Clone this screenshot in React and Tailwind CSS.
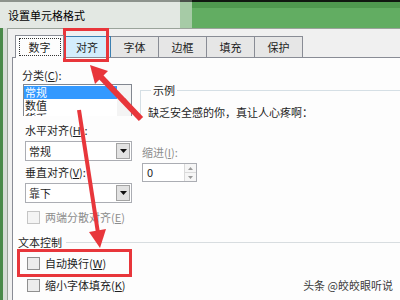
import React from 'react';

const tabs = ['数字', '对齐', '字体', '边框', '填充', '保护'];

function Tab({ label }) {
  if (label === '数字') {
    return (
      <div className="relative z-10 -mb-px w-[49px] h-[23px] border-l border-t border-r border-[#898c95] bg-[#fdfdfd] flex items-center justify-center">
        <div className="w-[42px] h-[18px] border border-dotted border-[#333] flex items-center justify-center leading-[14px]">{label}</div>
      </div>
    );
  }
  if (label === '对齐') {
    return (
      <div className="relative -ml-px w-[48px] h-[21px] border-l border-t border-r border-[#3c7fb1] bg-[#d3edfc] flex items-center justify-center leading-[14px]">
        {label}
        {/* red highlight box */}
        <div className="absolute -left-[1px] -top-[9px] w-[46px] h-[34px] border-[3px] border-[#e8363b]" />
      </div>
    );
  }
  return (
    <div className="-ml-px w-[49px] h-[21px] border-l border-t border-r border-[#898c95] bg-[#e6e6e6] flex items-center justify-center leading-[14px]">
      {label}
    </div>
  );
}

function Check({ disabled }) {
  return (
    <div
      className={
        disabled
          ? 'shrink-0 w-[13px] h-[13px] border border-[#c5c5c5] bg-[#f4f4f4]'
          : 'shrink-0 w-[13px] h-[13px] border border-[#8f8f8f] bg-[#ececec]'
      }
    />
  );
}

function Combo({ value }) {
  return (
    <div className="ml-[3px] h-[20px] w-[107px] border border-[#abadb3] bg-white flex">
      <div className="flex-1 pl-[3px] leading-[18px]">{value}</div>
      <div className="w-[14px] my-px mr-px bg-[#e2e2e2] border border-[#a3a3a3] flex items-center justify-center">
        <svg width="7" height="4" viewBox="0 0 7 4">
          <path d="M0 0h7L3.5 4z" fill="#111" />
        </svg>
      </div>
    </div>
  );
}

export default function App() {
  return (
    <div className="relative w-[400px] h-[300px] overflow-hidden flex flex-col bg-[#dde3dd] font-['Noto_Sans_CJK_SC',sans-serif] text-[11px] text-[#1e1e1e]">
      {/* title bar: light glass on the left, green desktop showing through on the right */}
      <div className="shrink-0 h-[28px] flex">
        <div className="flex-1 flex flex-col bg-[#e3e8e3]">
          <div className="h-[2px] bg-[#8d938d]" />
          <div className="flex-1 flex items-center pl-[8px] text-black leading-[14px]">设置单元格格式</div>
        </div>
        <div className="w-[12px] flex flex-col bg-[#a6cba6]">
          <div className="h-[2px] bg-[#4a514a]" />
        </div>
        <div className="w-[208px] flex flex-col bg-[#62ad62]">
          <div className="h-[2px] bg-[#101810]" />
          <div className="h-[6px] bg-[#4f994f]" />
        </div>
      </div>

      <div className="flex-1 min-h-0 flex">
        <div className="w-[3px] bg-[#4a8a4a]" />
        <div className="w-[4px] bg-[#d6ddd6]" />

        {/* dialog body */}
        <div className="flex-1 min-h-0 flex flex-col bg-[#f0f0f0] border-l border-t border-[#9aa39a]">
          <div className="shrink-0 h-[28px] pl-[7px] flex items-end">
            {tabs.map((t) => (
              <Tab key={t} label={t} />
            ))}
          </div>

          <div className="flex-1 min-h-0 ml-[4px] border-l border-t border-[#898c95] bg-[#fdfdfd] pl-[9px] pt-[10px] flex flex-col">
            <div className="shrink-0 flex">
              {/* left column */}
              <div className="w-[110px] flex flex-col">
                <div className="h-[14px] leading-[14px]">分类(<u>C</u>):</div>
                <div className="mt-[2px] ml-px h-[32px] w-[109px] border-l border-t border-r border-[#828790] bg-white flex overflow-hidden">
                  <div className="flex-1 flex flex-col pt-px">
                    <div className="h-[13px] leading-[13px] bg-[#3399ff] text-white pl-px">常规</div>
                    <div className="h-[13px] leading-[13px] pl-px">数值</div>
                    <div className="h-[13px] leading-[13px] pl-px">货币</div>
                  </div>
                  <div className="w-[14px] bg-[#f4f4f4] flex justify-center pt-[13px]">
                    <svg width="7" height="4" viewBox="0 0 7 4">
                      <path d="M0 4L3.5 0 7 4" fill="none" stroke="#8a8a8a" />
                    </svg>
                  </div>
                </div>

                <div className="mt-[7px] ml-[3px] h-[14px] leading-[14px]">水平对齐(<u>H</u>):</div>
                <div className="mt-[4px]">
                  <Combo value="常规" />
                </div>
                <div className="mt-[4px] ml-[3px] h-[14px] leading-[14px]">垂直对齐(<u>V</u>):</div>
                <div className="mt-[4px]">
                  <Combo value="靠下" />
                </div>
                <div className="mt-[7px] ml-[5px] h-[14px] flex items-center gap-[5px] text-[#8d8d8d]">
                  <Check disabled />
                  <span className="leading-[14px] whitespace-nowrap">两端分散对齐(<u>E</u>)</span>
                </div>
              </div>

              {/* right column */}
              <div className="ml-[8px] flex-1 flex flex-col">
                <fieldset className="mt-[15px] h-[37px] border-l border-t border-[#d5dfe5] pl-[7px]">
                  <legend className="ml-[3px] px-[2px] leading-[14px]">示例</legend>
                  <div className="pt-[8px] leading-[14px] whitespace-nowrap">缺乏安全感的你，真让人心疼啊：</div>
                </fieldset>
                <div className="mt-[25px] ml-[2px] h-[14px] leading-[14px] text-[#8d8d8d]">缩进(<u>I</u>):</div>
                <div className="mt-[4px] ml-[2px] h-[19px] w-[55px] border border-[#abadb3] bg-white flex">
                  <div className="flex-1 pl-[4px] leading-[17px]">0</div>
                  <div className="w-[12px] flex flex-col border-l border-[#dadada] bg-[#f6f6f6]">
                    <div className="flex-1 flex items-center justify-center border-b border-[#dadada]">
                      <svg width="5" height="3" viewBox="0 0 5 3">
                        <path d="M0 3L2.5 0 5 3z" fill="#9a9a9a" />
                      </svg>
                    </div>
                    <div className="flex-1 flex items-center justify-center">
                      <svg width="5" height="3" viewBox="0 0 5 3">
                        <path d="M0 0h5L2.5 3z" fill="#9a9a9a" />
                      </svg>
                    </div>
                  </div>
                </div>
              </div>
            </div>

            {/* text control */}
            <div className="shrink-0 mt-[11px] -ml-[4px] h-[14px] flex items-center gap-[4px]">
              <span className="leading-[14px]">文本控制</span>
              <div className="flex-1 h-px bg-[#d8dde0]" />
            </div>
            <div className="shrink-0 relative mt-[7px] ml-[5px] h-[14px] flex items-center gap-[5px]">
              <Check />
              <span className="leading-[14px]">自动换行(<u>W</u>)</span>
              <div className="absolute -left-[10px] -top-[7px] w-[115px] h-[28px] border-[3px] border-[#e8363b]" />
            </div>
            <div className="shrink-0 mt-[8px] ml-[5px] h-[14px] flex items-center gap-[5px]">
              <Check />
              <span className="leading-[14px]">缩小字体填充(<u>K</u>)</span>
            </div>
            <div className="shrink-0 mt-[8px] ml-[5px] h-[14px] flex items-center gap-[5px]">
              <Check />
              <span className="leading-[14px]">合并单元格(<u>M</u>)</span>
            </div>
          </div>
        </div>
      </div>

      {/* red arrows */}
      <svg className="absolute inset-0 pointer-events-none" width="400" height="300" viewBox="0 0 400 300">
        <line x1="141" y1="119" x2="99" y2="75" stroke="#e8363b" strokeWidth="6" />
        <polygon points="90,65 108,71 95,84" fill="#e8363b" />
        <line x1="79" y1="110" x2="98" y2="233" stroke="#e8363b" strokeWidth="4" />
        <polygon points="100,248 106,229 89,232" fill="#e8363b" />
      </svg>

      {/* watermark */}
      <div className="absolute right-[7px] bottom-[8px] text-[11px] leading-[14px] text-[#3a3a3a] [text-shadow:0_0_2px_#fff,0_0_2px_#fff]">
        头条 @皎皎眼听说
      </div>
    </div>
  );
}
